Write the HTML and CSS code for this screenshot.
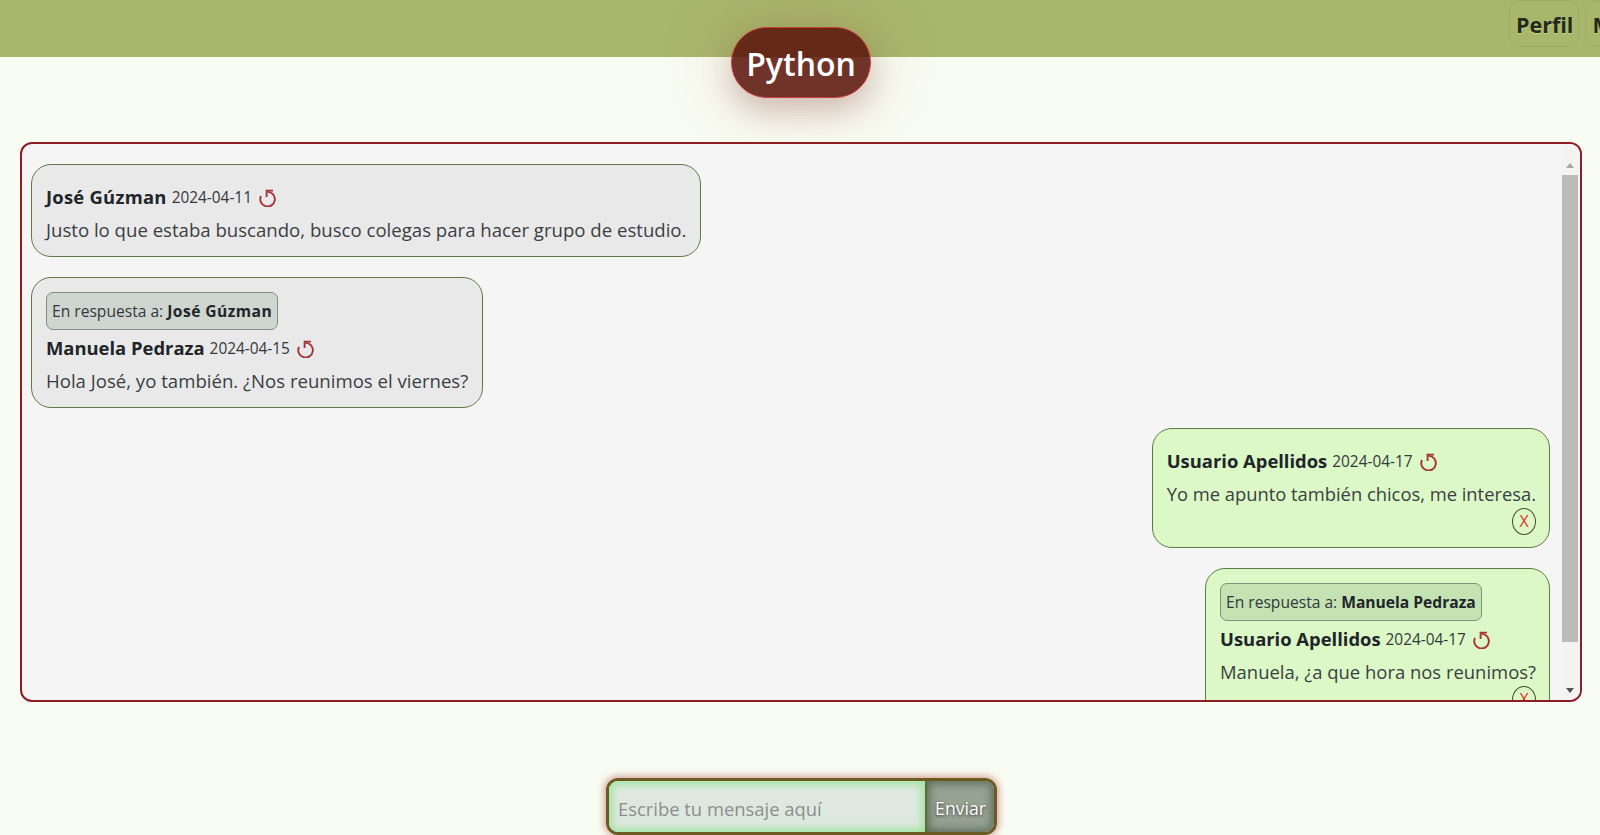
FILE: index.html
```html
<!DOCTYPE html>
<html lang="es">
<head>
<meta charset="utf-8">
<title>Python</title>
<link rel="stylesheet" href="styles.css">
</head>
<body>
<header class="topbar">
  <nav class="nav">
    <a class="nav-btn">Perfil</a>
    <a class="nav-btn">Mis cursos</a>
  </nav>
</header>
<h1 class="pill">Python</h1>
<main class="chat">
  <article class="msg">
    <div class="meta"><strong class="author wide">José Gúzman</strong> <span class="date">2024-04-11</span>
      <svg class="reply" viewBox="0 0 18 18"><path d="M2 7A7.3 7.3 0 1 0 8.6 2.9"/><path d="M14 1.6H7.6V8"/></svg></div>
    <p class="text">Justo lo que estaba buscando, busco colegas para hacer grupo de estudio.</p>
  </article>
  <article class="msg answer">
    <div class="quote">En respuesta a: <strong class="wider">José Gúzman</strong></div>
    <div class="meta"><strong class="author">Manuela Pedraza</strong> <span class="date">2024-04-15</span>
      <svg class="reply" viewBox="0 0 18 18"><path d="M2 7A7.3 7.3 0 1 0 8.6 2.9"/><path d="M14 1.6H7.6V8"/></svg></div>
    <p class="text">Hola José, yo también. ¿Nos reunimos el viernes?</p>
  </article>
  <article class="msg mine">
    <div class="meta"><strong class="author">Usuario Apellidos</strong> <span class="date">2024-04-17</span>
      <svg class="reply" viewBox="0 0 18 18"><path d="M2 7A7.3 7.3 0 1 0 8.6 2.9"/><path d="M14 1.6H7.6V8"/></svg></div>
    <p class="text">Yo me apunto también chicos, me interesa.</p>
    <div class="actions"><span class="del">X</span></div>
  </article>
  <article class="msg mine answer">
    <div class="quote">En respuesta a: <strong>Manuela Pedraza</strong></div>
    <div class="meta"><strong class="author">Usuario Apellidos</strong> <span class="date">2024-04-17</span>
      <svg class="reply" viewBox="0 0 18 18"><path d="M2 7A7.3 7.3 0 1 0 8.6 2.9"/><path d="M14 1.6H7.6V8"/></svg></div>
    <p class="text">Manuela, ¿a que hora nos reunimos?</p>
    <div class="actions"><span class="del">X</span></div>
  </article>
  <div class="scrollbar">
    <span class="arrow-up"></span>
    <span class="thumb"></span>
    <span class="arrow-down"></span>
  </div>
</main>
<form class="composer">
  <input class="field" type="text" placeholder="Escribe tu mensaje aquí">
  <button class="send" type="button">Enviar</button>
</form>
</body>
</html>
```
FILE: styles.css
```css
* { box-sizing: border-box; }
html, body { height: 100%; }
body {
  margin: 0;
  height: 835px;
  overflow: hidden;
  display: flex;
  flex-direction: column;
  background: #f9fcf2;
  font-family: "Open Sans", "Noto Sans", sans-serif;
  color: #212529;
  position: relative;
}
.topbar {
  flex: 0 0 57px;
  background: #a9b76c;
  display: flex;
  overflow: hidden;
  padding-left: 1509px;
}
.nav { display: flex; gap: 6px; flex: none; height: 47px; }
.nav-btn {
  display: block;
  height: 47px;
  padding: 9px 5px 9px 6px;
  border: 1px solid #9dad60;
  border-radius: 12px;
  font-size: 21.5px;
  line-height: 30px;
  font-weight: 700;
  color: #23291c;
  white-space: nowrap;
  text-shadow: 0 1px 1px #c6d77f;
}
.pill {
  position: absolute;
  left: 731px;
  top: 27px;
  width: 140px;
  height: 71px;
  margin: 0;
  border: 1.5px solid #c93a3a;
  border-radius: 36px;
  background: rgba(90, 17, 9, 0.86);
  color: #fff;
  font-size: 32px;
  font-weight: 600;
  line-height: 71px;
  text-align: center;
  box-shadow: 0 12px 30px rgba(120, 30, 30, 0.25), 0 0 70px 10px rgba(120, 70, 40, 0.13);
}
.chat {
  flex: 0 0 560px;
  margin: 85px 18px 0 20px;
  padding: 20px 30px 0 9px;
  border: 2px solid #8e1c22;
  border-radius: 12px;
  background: #f5f5f5;
  overflow: hidden;
  position: relative;
  display: flex;
  flex-direction: column;
  align-items: flex-start;
  gap: 20px;
}
.scrollbar {
  position: absolute;
  top: 0;
  right: 0;
  bottom: 0;
  width: 19px;
  padding: 19px 2px 0 1px;
  display: flex;
  flex-direction: column;
  align-items: center;
  background: #f3f3f3;
}
.thumb {
  width: 16px;
  height: 467px;
  margin-top: 7px;
  background: #bbbbbb;
}
.arrow-up {
  width: 0;
  height: 0;
  border: 4.5px solid transparent;
  border-top: 0;
  border-bottom: 5px solid #a6a6a6;
}
.arrow-down {
  position: absolute;
  bottom: 7px;
  width: 0;
  height: 0;
  border: 4.5px solid transparent;
  border-bottom: 0;
  border-top: 5px solid #505050;
}
.msg {
  flex: none;
  border: 1px solid #5f7a45;
  border-radius: 20px;
  background: #e9e9e9;
  padding: 15px 14px 11px;
  max-width: 100%;
}
.mine { align-self: flex-end; background: #dcf8c6; padding-right: 13px; }
.meta { display: flex; align-items: center; gap: 5px; height: 32px; }
.author { font-size: 18.4px; font-weight: 700; }
.wide { letter-spacing: 0.25px; }
.wider { letter-spacing: 0.45px; }
.date { font-size: 15.4px; position: relative; top: 1px; color: #33383d; }
.reply { width: 18px; height: 18px; margin: 4px 0 0 2px; fill: none; stroke: #a5343a; stroke-width: 1.9; }
.text { margin: 0; padding-top: 2px; font-size: 18.6px; line-height: 31px; color: #3a3f44; white-space: nowrap; }
.mine .text { font-size: 18.35px; }
.mine.answer .text { font-size: 18.45px; }
.quote {
  display: table;
  height: 37px;
  padding: 0 5px;
  margin: -1px 0 1px;
  border: 1px solid #7f8f80;
  border-radius: 7px;
  background: rgba(90, 130, 90, 0.18);
  color: #33383d;
  font-size: 15.6px;
  line-height: 36px;
  white-space: nowrap;
}
.quote strong { color: #212529; }
.actions { display: flex; justify-content: flex-end; margin: -1px 0 1px; }
.del {
  width: 24px;
  height: 27px;
  border: 1px solid #4a4a2a;
  border-radius: 50%;
  color: #e0352b;
  font-size: 16px;
  line-height: 25px;
  text-align: center;
}
.composer {
  flex: none;
  display: flex;
  width: 391px;
  height: 57px;
  margin: 76px 0 0 606px;
  border: 3px solid #6d5a22;
  border-radius: 12px;
  box-shadow: 0 0 7px 2px rgba(170, 60, 40, 0.45);
  overflow: hidden;
}
.field {
  flex: 1;
  min-width: 0;
  border: 0;
  border-right: 2px solid #5f6a35;
  padding: 3px 9px 0;
  background: #dfe8e0;
  box-shadow: inset 0 0 8px 3px #9ce39c;
  font: 18.4px "Open Sans", sans-serif;
  outline: 0;
}
.field::placeholder { color: #8a8f8b; }
.send {
  flex: 0 0 67px;
  border: 0;
  padding: 3px 0 0;
  background: #96a292;
  box-shadow: inset 0 0 10px 2px #5b6854;
  color: #fff;
  font: 500 17.6px "Open Sans", sans-serif;
  text-shadow: 0 1px 3px #333;
}
```
